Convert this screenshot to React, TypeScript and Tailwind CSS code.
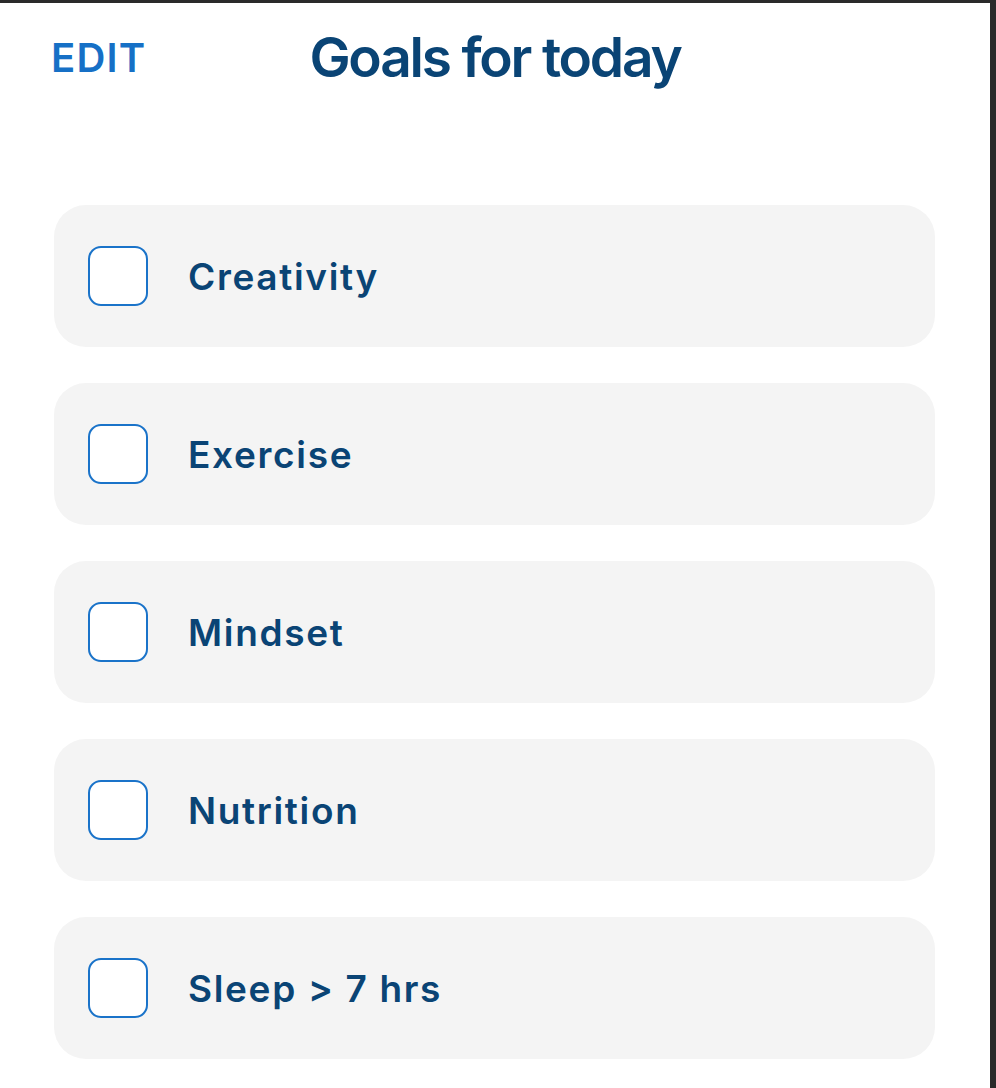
import React from "react";

const goals = ["Creativity", "Exercise", "Mindset", "Nutrition", "Sleep > 7 hrs"];

export default function App() {
  return (
    <div className="h-[1088px] w-[996px] bg-[#2a2a2a] pt-[3px] pr-[6px] overflow-hidden">
      <div
        className="h-full w-full bg-white"
        style={{ fontFamily: "Inter, 'Noto Sans', sans-serif" }}
      >
        <div className="relative h-[150px]">
          <div className="absolute left-[51px] top-[35px] text-[40px] leading-none font-semibold tracking-[0.03em] text-[#1670c6]">
            EDIT
          </div>
          <div className="pt-[27px] text-center text-[55px] leading-none font-semibold tracking-[-0.04em] text-[#0a4475]">
            Goals for today
          </div>
        </div>
        <div className="ml-[54px] mt-[52px] flex w-[881px] flex-col gap-[36px]">
          {goals.map((g) => (
            <div
              key={g}
              className="flex h-[142px] items-center rounded-[32px] bg-[#f4f4f4] pl-[34px]"
            >
              <div className="h-[60px] w-[60px] rounded-[13px] border-[2.5px] border-[#1a73c9] bg-white" />
              <div className="ml-[40px] text-[37px] leading-none font-semibold tracking-[0.045em] text-[#0a4475]">
                {g}
              </div>
            </div>
          ))}
        </div>
      </div>
    </div>
  );
}
